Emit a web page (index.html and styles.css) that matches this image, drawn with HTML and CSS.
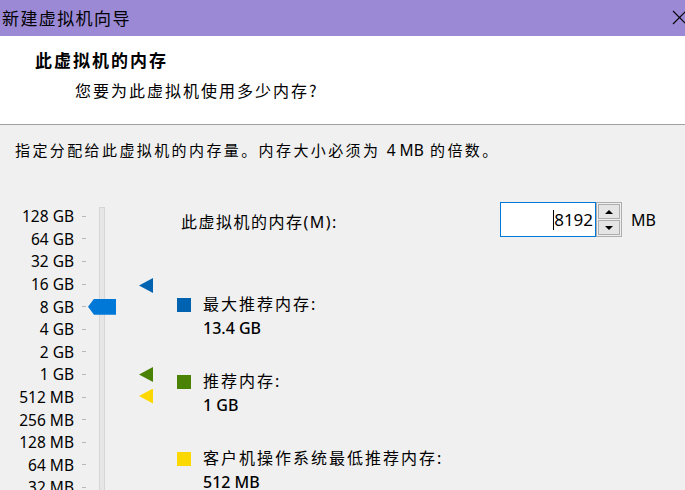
FILE: index.html
```html
<!DOCTYPE html>
<html>
    <head>
        <meta charset="utf-8">
        <title>新建虚拟机向导</title>
        <link rel="stylesheet" href="styles.css">
    </head>
    <body>
        <div class="titlebar">
            <span class="title">新建虚拟机向导</span>
            <svg class="close" width="14" height="15" viewBox="0 0 14 15">
                <path d="M1 1 L14 14 M14 1 L1 14" stroke="#000" stroke-width="1.1" fill="none"/>
            </svg>
        </div>
        <div class="header">
            <h1>此虚拟机的内存</h1>
            <p>您要为此虚拟机使用多少内存?</p>
        </div>
        <div class="content">
            <p class="intro">指定分配给此虚拟机的内存量。内存大小必须为 <span class="latin">4 MB</span> 的倍数。</p>
            <div class="main">
                <!-- 왼쪽 눈금 슬라이더 -->
                <div class="scale">
                    <div class="step"><span class="label">128 GB</span><span class="tick"></span><span class="track"></span><span class="mark"></span></div>
                    <div class="step"><span class="label">64 GB</span><span class="tick"></span><span class="track"></span><span class="mark"></span></div>
                    <div class="step"><span class="label">32 GB</span><span class="tick"></span><span class="track"></span><span class="mark"></span></div>
                    <div class="step"><span class="label">16 GB</span><span class="tick"></span><span class="track"></span><span class="mark"><i class="tri tri-blue"></i></span></div>
                    <div class="step"><span class="label">8 GB</span><span class="tick"></span><span class="track"><i class="thumb"></i></span><span class="mark"></span></div>
                    <div class="step"><span class="label">4 GB</span><span class="tick"></span><span class="track"></span><span class="mark"></span></div>
                    <div class="step"><span class="label">2 GB</span><span class="tick"></span><span class="track"></span><span class="mark"></span></div>
                    <div class="step"><span class="label">1 GB</span><span class="tick"></span><span class="track"></span><span class="mark"><i class="tri tri-green"></i></span></div>
                    <div class="step"><span class="label">512 MB</span><span class="tick"></span><span class="track"></span><span class="mark"><i class="tri tri-yellow"></i></span></div>
                    <div class="step"><span class="label">256 MB</span><span class="tick"></span><span class="track"></span><span class="mark"></span></div>
                    <div class="step"><span class="label">128 MB</span><span class="tick"></span><span class="track"></span><span class="mark"></span></div>
                    <div class="step"><span class="label">64 MB</span><span class="tick"></span><span class="track"></span><span class="mark"></span></div>
                    <div class="step"><span class="label">32 MB</span><span class="tick"></span><span class="track"></span><span class="mark"></span></div>
                </div>
                <!-- 오른쪽 입력칸과 범례 -->
                <div class="side">
                    <div class="memory">
                        <span class="memory-label">此虚拟机的内存(M):</span>
                        <div class="spin">
                            <div class="spin-input"><span class="caret"></span>8192</div>
                            <div class="spin-buttons">
                                <div class="spin-btn"><i class="arrow-up"></i></div>
                                <div class="spin-btn"><i class="arrow-down"></i></div>
                            </div>
                        </div>
                        <span class="unit">MB</span>
                    </div>
                    <div class="legend">
                        <div class="item">
                            <span class="swatch swatch-blue"></span>
                            <div>
                                <div class="item-label">最大推荐内存:</div>
                                <div class="item-value">13.4 GB</div>
                            </div>
                        </div>
                        <div class="item">
                            <span class="swatch swatch-green"></span>
                            <div>
                                <div class="item-label">推荐内存:</div>
                                <div class="item-value">1 GB</div>
                            </div>
                        </div>
                        <div class="item">
                            <span class="swatch swatch-yellow"></span>
                            <div>
                                <div class="item-label">客户机操作系统最低推荐内存:</div>
                                <div class="item-value">512 MB</div>
                            </div>
                        </div>
                    </div>
                </div>
            </div>
        </div>
    </body>
</html>
```

FILE: styles.css
```css
html, body {
    margin: 0;
    padding: 0;
}
body {
    width: 685px;
    height: 490px;
    overflow: hidden;
    background-color: #f0f0f0;
    color: #000;
    font-family: "Noto Sans", "Noto Sans CJK SC", sans-serif;
}
.titlebar {
    height: 36px;
    background-color: #9b89d6;
    display: flex;
    align-items: center;
    justify-content: space-between;
    padding-left: 2px;
}
.title {
    font-family: "Noto Sans CJK SC", sans-serif;
    font-size: 17px;
    letter-spacing: 1.4px;
    line-height: 36px;
}
.close {
    margin-right: -1px;
    margin-top: -2px;
}
.header {
    height: 88px;
    background-color: #fff;
    border-bottom: 1px solid #a0a0a0;
}
.header h1 {
    margin: 0;
    padding: 12px 0 0 35px;
    font-family: "Noto Sans CJK SC", sans-serif;
    font-size: 17px;
    font-weight: 700;
    letter-spacing: 2px;
    line-height: 24px;
}
.header p {
    margin: 6px 0 0 75px;
    font-family: "Noto Sans CJK SC", sans-serif;
    font-size: 16px;
    letter-spacing: 2px;
    line-height: 24px;
}
.intro {
    margin: 0;
    padding: 15px 0 0 15px;
    font-family: "Noto Sans", "Noto Sans CJK SC", sans-serif;
    font-size: 15px;
    letter-spacing: 2.4px;
    line-height: 20px;
}
.intro .latin {
    letter-spacing: 0;
    font-size: 15.5px;
}
.main {
    display: flex;
    margin-top: 42px;
}
.scale {
    padding-top: 3px;
    width: 177px;
}
.step {
    display: grid;
    grid-template-columns: 74px 12px 19px 48px;
    height: 22.6px;
    align-items: center;
}
.label {
    text-align: right;
    font-size: 15.5px;
    line-height: 22px;
}
.tick {
    height: 1px;
    width: 4px;
    margin-left: 8px;
    background-color: #b8b8b8;
}
.track {
    margin-left: 13px;
    width: 6px;
    height: 100%;
    box-sizing: border-box;
    background-color: #e6e6e6;
    border-left: 1px solid #d6d6d6;
    border-right: 1px solid #d6d6d6;
    position: relative;
}
.step:first-child .track {
    border-top: 1px solid #d6d6d6;
    height: calc(100% - 2px);
    align-self: end;
}
.mark {
    display: flex;
    justify-content: flex-end;
    align-items: center;
}
.thumb {
    position: absolute;
    left: -12px;
    top: 50%;
    margin-top: -8px;
    width: 28px;
    height: 16px;
    background-color: #0078d7;
    clip-path: polygon(0 50%, 6px 0, 100% 0, 100% 100%, 6px 100%);
}
.tri {
    display: block;
    width: 14px;
    height: 15px;
    clip-path: polygon(0 50%, 100% 0, 100% 100%);
}
.tri-blue {
    background-color: #0063b1;
    margin-top: 3px;
}
.tri-green {
    background-color: #498205;
}
.tri-yellow {
    background-color: #fcd800;
    margin-top: -2px;
}
.side {
    flex: 1;
}
.memory {
    display: flex;
    align-items: center;
    padding-right: 29px;
    height: 35px;
}
.memory-label {
    flex: 1;
    padding-left: 4px;
    padding-top: 2px;
    font-size: 16px;
    letter-spacing: 1.5px;
}
.spin {
    display: flex;
    height: 35px;
}
.spin-input {
    width: 96px;
    box-sizing: border-box;
    border: 1px solid #0078d7;
    background-color: #fff;
    display: flex;
    align-items: center;
    justify-content: flex-end;
    padding-right: 2px;
    font-size: 17px;
}
.caret {
    width: 1px;
    height: 20px;
    background-color: #000;
}
.spin-buttons {
    width: 26px;
    box-sizing: border-box;
    border: 1px solid #adadad;
    display: flex;
    flex-direction: column;
    padding: 1px;
    gap: 1px;
    background-color: #f0f0f0;
}
.spin-btn {
    flex: 1;
    border: 1px solid #adadad;
    background-color: #e5e5e5;
    display: flex;
    align-items: center;
    justify-content: center;
}
.arrow-up, .arrow-down {
    display: block;
    width: 0;
    height: 0;
    border-left: 4px solid transparent;
    border-right: 4px solid transparent;
}
.arrow-up {
    border-bottom: 4px solid #000;
}
.arrow-down {
    border-top: 4px solid #000;
}
.unit {
    margin-left: 9px;
    font-size: 16px;
}
.legend {
    margin-top: 55px;
    display: flex;
    flex-direction: column;
    gap: 29px;
}
.item {
    display: flex;
    gap: 12px;
}
.swatch {
    width: 14px;
    height: 14px;
    margin-top: 6px;
    flex: none;
}
.swatch-blue {
    background-color: #0063b1;
}
.swatch-green {
    background-color: #498205;
}
.swatch-yellow {
    background-color: #fcd800;
}
.item-label {
    font-size: 16px;
    letter-spacing: 2px;
    line-height: 24px;
}
.item-value {
    font-size: 16px;
    font-weight: 500;
    line-height: 24px;
}
```
